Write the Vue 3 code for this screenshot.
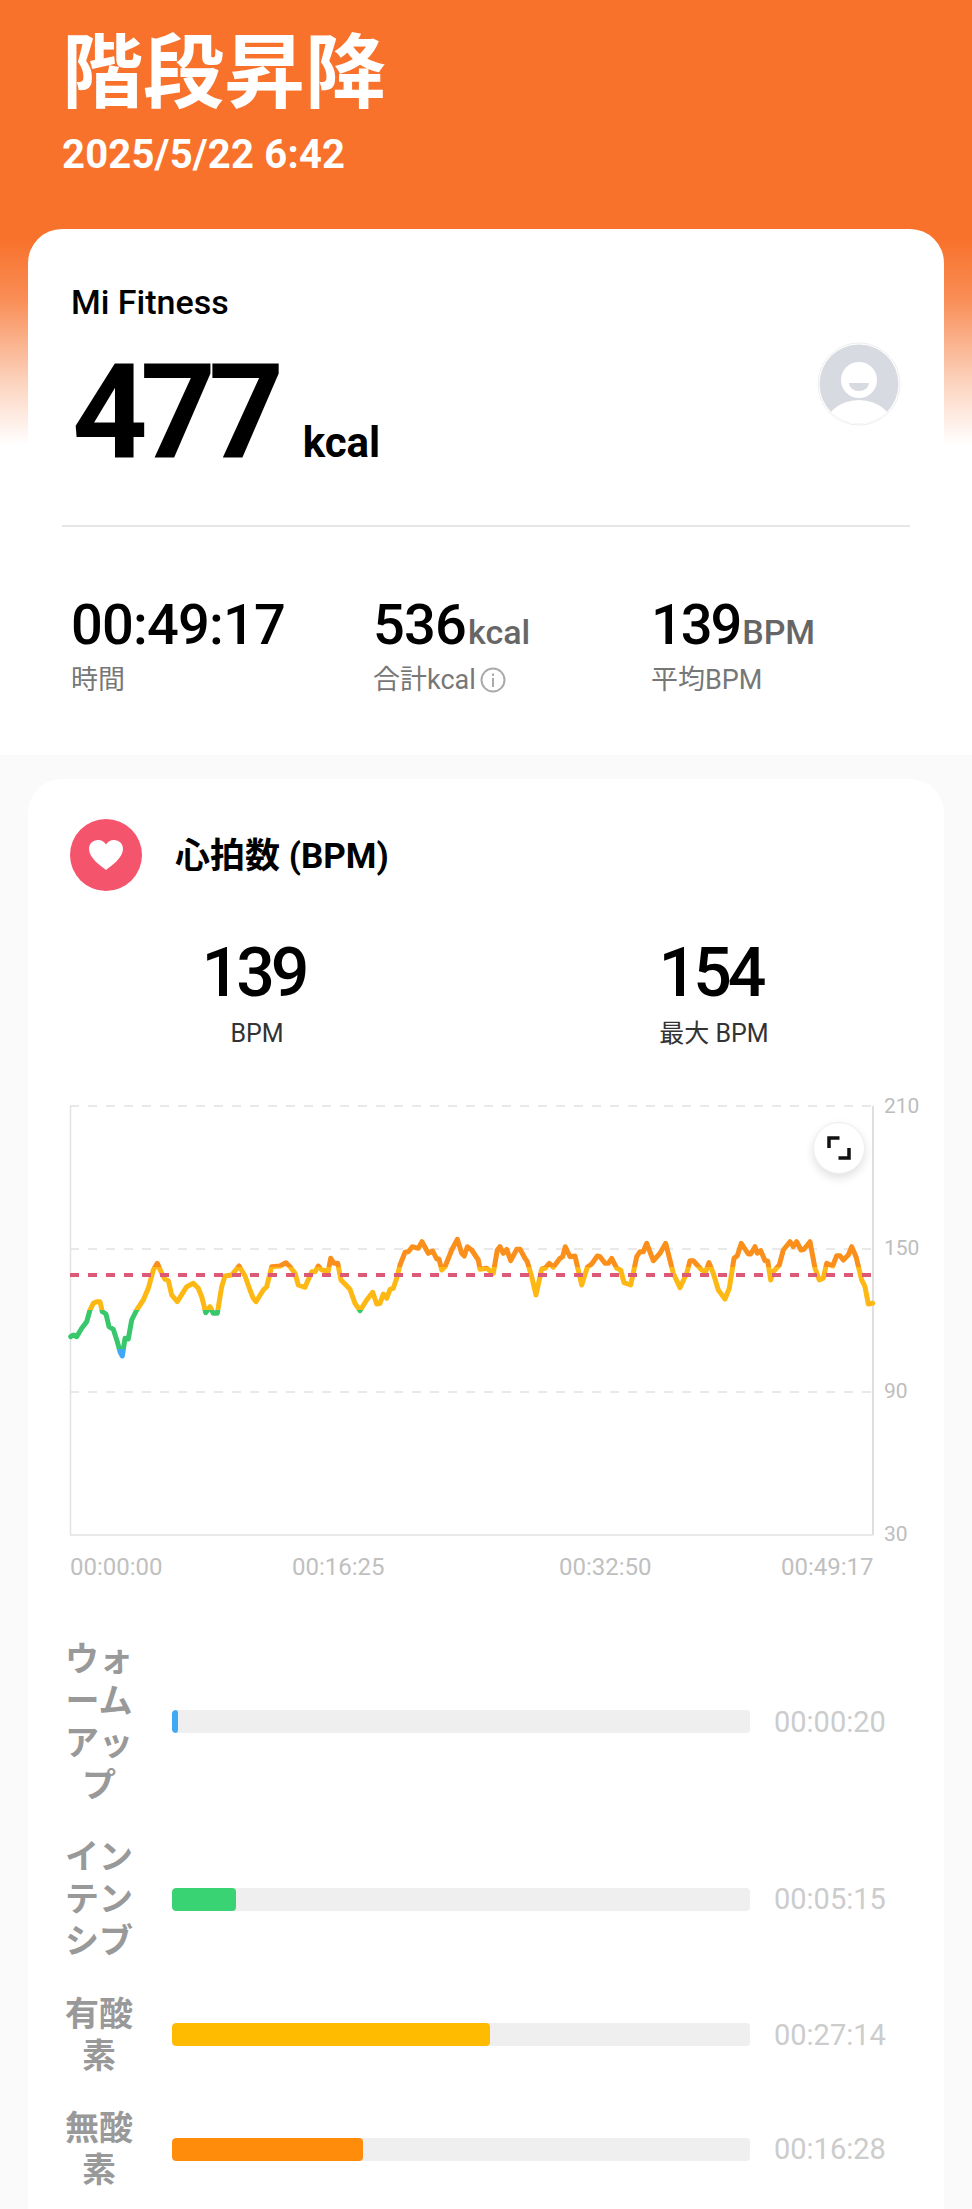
<template>
  <div class="page">
    <section class="summary">
      <header class="hero">
        <h1 class="hero-title">階段昇降</h1>
        <p class="hero-date">2025/5/22 6:42</p>
      </header>
      <div class="summary-card">
        <p class="source">Mi Fitness</p>
        <div class="calories">
          <div class="calories-value">
            <span class="big-num">477</span>
            <span class="big-unit">kcal</span>
          </div>
          <svg class="avatar" viewBox="0 0 84 84">
            <defs>
              <clipPath id="avatarClip"><circle cx="42" cy="42" r="39.5" /></clipPath>
            </defs>
            <circle cx="42" cy="42" r="41" fill="none" stroke="#eeeef0" stroke-width="1" />
            <circle cx="42" cy="42" r="39.5" fill="#d8dae2" />
            <g clip-path="url(#avatarClip)">
              <ellipse cx="42" cy="92" rx="37" ry="34" fill="#fff" />
              <circle cx="42" cy="38" r="18" fill="#fff" />
              <path d="M32 41h20a10 8 0 0 1-20 0z" fill="#d8dae2" />
            </g>
          </svg>
        </div>
        <div class="divider"></div>
        <div class="stats">
          <div v-for="s in stats" :key="s.label" class="stat">
            <div class="stat-value"><span :class="{ tight: s.tight }">{{ s.value }}</span><span v-if="s.unit" class="stat-unit">{{ s.unit }}</span></div>
            <div class="stat-label">
              {{ s.label }}
              <svg v-if="s.info" class="info-icon" viewBox="0 0 26 26">
                <circle cx="13" cy="13" r="11.5" fill="none" stroke="#aaa" stroke-width="2" />
                <rect x="12" y="11" width="2" height="9" fill="#aaa" />
                <rect x="12" y="6.5" width="2" height="2.5" fill="#aaa" />
              </svg>
            </div>
          </div>
        </div>
      </div>
    </section>

    <section class="heart-card">
      <div class="heart-head">
        <span class="heart-badge">
          <svg viewBox="0 0 34 30" width="34" height="30">
            <path d="M17 30C12 26 0 18 0 9C0 3.5 4 0 9 0C12.500 0 15.500 1.800 17 4.500C18.500 1.800 21.500 0 25 0C30 0 34 3.500 34 9C34 18 22 26 17 30Z" fill="#fff" />
          </svg>
        </span>
        <h2 class="heart-title">心拍数 (BPM)</h2>
      </div>
      <div class="heart-nums">
        <div class="heart-num">
          <div class="heart-val">139</div>
          <div class="heart-cap">BPM</div>
        </div>
        <div class="heart-num">
          <div class="heart-val">154</div>
          <div class="heart-cap">最大 BPM</div>
        </div>
      </div>

      <div class="chart">
        <svg class="chart-svg" viewBox="0 0 916 490" width="916" height="490">
          <defs>
            <linearGradient id="zoneGrad" gradientUnits="userSpaceOnUse" x1="0" y1="0" x2="0" y2="490">
              <stop v-for="(st, i) in zoneStops" :key="i" :offset="st.offset" :stop-color="st.color" />
            </linearGradient>
          </defs>
          <line v-for="y in [10, 153, 296]" :key="y" x1="42" x2="845" :y1="y" :y2="y" class="grid-dash" />
          <line x1="42.500" x2="42.500" y1="10" y2="439" stroke="#e2e2e2" stroke-width="1.500" />
          <line x1="845" x2="845" y1="10" y2="439" stroke="#d4d4d4" stroke-width="1.500" />
          <line x1="42" x2="845" y1="439" y2="439" stroke="#e2e2e2" stroke-width="1.500" />
          <polyline :points="linePoints" fill="none" stroke="url(#zoneGrad)" stroke-width="5" stroke-linejoin="round" stroke-linecap="round" />
          <line x1="42" x2="845" y1="179" y2="179" stroke="#dc5a75" stroke-width="4" stroke-dasharray="9 9" />
          <text v-for="t in yLabels" :key="t.text" x="856" :y="t.y" class="axis-y">{{ t.text }}</text>
          <text v-for="t in xLabels" :key="t.text" :x="t.x" y="479" class="axis-x">{{ t.text }}</text>
        </svg>
        <button class="expand" aria-label="expand">
          <svg viewBox="0 0 24 24" width="24" height="24">
            <path d="M12.500 2H2v10M11.500 22H22V12" fill="none" stroke="#111" stroke-width="3.500" />
          </svg>
        </button>
      </div>

      <div class="zones">
        <div v-for="z in zones" :key="z.label" class="zone">
          <div class="zone-label">{{ z.label }}</div>
          <div class="zone-track">
            <div class="zone-fill" :style="{ width: z.width + 'px', background: z.color }"></div>
          </div>
          <div class="zone-time">{{ z.time }}</div>
        </div>
      </div>
    </section>
  </div>
</template>

<script setup>
const stats = [
  { value: '00:49:17', label: '時間' },
  { value: '536', unit: 'kcal', label: '合計kcal', info: true },
  { value: '139', unit: 'BPM', label: '平均BPM', tight: true }
]

const zones = [
  { label: 'ウォームアップ', time: '00:00:20', width: 6, color: '#3fa9f5' },
  { label: 'インテンシブ', time: '00:05:15', width: 64, color: '#39d373' },
  { label: '有酸素', time: '00:27:14', width: 318, color: '#ffbb00' },
  { label: '無酸素', time: '00:16:28', width: 191, color: '#ff8c0a' }
]

const yLabels = [
  { text: '210', y: 17 },
  { text: '150', y: 159 },
  { text: '90', y: 302 },
  { text: '30', y: 445 }
]

const xLabels = [
  { text: '00:00:00', x: 42 },
  { text: '00:16:25', x: 264 },
  { text: '00:32:50', x: 531 },
  { text: '00:49:17', x: 753 }
]

// traced from the reference, in 3x crop coordinates
const left = [92,440,100,435,110,440,125,415,140,395,150,360,160,340,170,335,180,335,187,365,198,372,207,410,220,418,232,455,240,485,247,498,255,445,265,447,275,390,290,360,310,330,325,295,340,240,352,220,365,250,375,268,385,272,395,315,412,335,440,290,460,280,475,295,485,320,497,368,510,350,520,370,532,370,545,290,555,258,575,255,597,228,615,258,630,300,640,325,648,335,670,300,680,290,695,230,720,228,738,218,750,230,765,250,775,285,795,292,815,245,825,245,835,228,845,240,865,243,872,205,882,220,893,220,903,270,930,298,945,340,960,362,980,330,998,307,1010,342,1020,340,1030,312,1040,325,1050,298,1060,295,1070,265,1080,225,1095,187,1105,185,1117,170,1135,175,1146,155,1165,190,1178,183,1190,207,1197,207,1205,240,1215,230,1235,180,1252,148,1265,190,1273,198,1282,170,1295,180,1315,210,1320,238,1340,235,1360,250,1372,180,1380,170,1390,190,1400,178,1412,212,1430,178,1440,178]
const right = [60,178,75,205,82,215,95,260,108,315,125,237,135,235,148,220,160,232,180,205,188,200,196,170,210,200,225,198,245,285,262,232,275,222,292,198,300,200,315,220,325,220,335,205,350,235,362,240,372,278,392,285,410,200,420,185,430,185,440,160,460,212,480,190,497,160,520,250,540,293,560,250,570,212,580,212,605,240,617,245,627,218,640,250,655,300,675,327,688,295,702,205,712,197,724,160,745,192,752,192,765,170,772,190,782,182,795,212,803,213,812,270,820,245,838,225,850,180,870,155,880,170,890,155,903,180,912,178,930,155,945,235,958,270,970,265,980,220,998,228,1010,197,1020,197,1030,210,1045,195,1055,170,1068,200,1085,270,1095,290,1105,342,1118,340]

function mapPoints(arr, originX) {
  const out = []
  for (let i = 0; i < arr.length; i += 2) {
    const x = arr[i] / 3 + originX - 28
    const y = arr[i + 1] / 3 + 1190 - 1096
    out.push(x.toFixed(1) + ',' + y.toFixed(1))
  }
  return out
}

const linePoints = mapPoints(left, 40).concat(mapPoints(right, 500)).join(' ')

// colour changes by heart rate band, hard stops on y
const bands = [
  { end: 171, color: '#fb8f1b' },
  { end: 214, color: '#fdb813' },
  { end: 253, color: '#38c76c' },
  { end: 490, color: '#3fa9f5' }
]
const zoneStops = []
let prev = 0
for (const b of bands) {
  zoneStops.push({ offset: prev / 490, color: b.color })
  zoneStops.push({ offset: b.end / 490, color: b.color })
  prev = b.end
}
</script>

<style>
html, body {
  margin: 0;
  background: #fafafa;
}
</style>

<style scoped>
.page {
  width: 972px;
  height: 2209px;
  overflow: hidden;
  background: #fafafa;
  font-family: Roboto, "Noto Sans CJK JP", sans-serif;
}

.summary {
  height: 755px;
  background: linear-gradient(180deg, #f8722c 0, #f8722c 240px, #f98e57 300px, #fab08a 340px, #fcd5c1 385px, #ffffff 445px) no-repeat 0 0 / 100% 445px, #fff;
}

.hero {
  height: 229px;
  padding: 34px 0 0 62px;
  box-sizing: border-box;
  color: #fff;
}

.hero-title {
  margin: 0;
  font-size: 81px;
  line-height: 80px;
  font-weight: 700;
}

.hero-date {
  margin: 19px 0 0;
  font-size: 40px;
  line-height: 44px;
  font-weight: 700;
  letter-spacing: 0.2px;
}

.summary-card {
  margin: 0 28px;
  height: 526px;
  background: #fff;
  border-radius: 34px 34px 0 0;
  padding-top: 53px;
  box-sizing: border-box;
}

.source {
  margin: 0;
  padding-left: 43px;
  font-size: 34px;
  line-height: 40px;
  font-weight: 500;
  color: #000;
}

.calories {
  display: flex;
  justify-content: space-between;
  align-items: flex-start;
  margin-top: 24px;
  padding: 0 43px 0 44px;
  height: 132px;
}

.calories-value {
  display: flex;
  align-items: baseline;
}

.big-num {
  font-size: 132px;
  line-height: 132px;
  font-weight: 700;
  letter-spacing: -7.500px;
  color: #000;
}

.big-unit {
  margin-left: 26px;
  font-size: 42px;
  font-weight: 700;
  color: #000;
}

.avatar {
  width: 84px;
  height: 84px;
  margin-top: -4px;
}

.divider {
  height: 2px;
  margin: 47px 34px 0;
  background: #e6e6e6;
}

.stats {
  display: grid;
  grid-template-columns: 302px 278px 1fr;
  margin-top: 70px;
  padding-left: 43px;
}

.stat-value {
  font-size: 56px;
  line-height: 56px;
  font-weight: 500;
  letter-spacing: -0.800px;
  color: #000;
}

.tight {
  letter-spacing: -2.100px;
}

.stat-unit {
  margin-left: 2px;
  font-size: 34px;
  line-height: 1;
  font-weight: 500;
  letter-spacing: 0;
  color: #666;
}

.stat-label {
  display: flex;
  align-items: center;
  gap: 4px;
  margin-top: 10px;
  font-size: 27px;
  line-height: 34px;
  color: #777;
}

.info-icon {
  width: 26px;
  height: 26px;
}

.heart-card {
  margin: 24px 28px 0;
  height: 1430px;
  background: #fff;
  border-radius: 34px 34px 0 0;
}

.heart-head {
  display: flex;
  align-items: center;
  padding: 40px 0 0 42px;
}

.heart-badge {
  display: flex;
  align-items: center;
  justify-content: center;
  width: 72px;
  height: 72px;
  border-radius: 50%;
  background: #f5546d;
}

.heart-title {
  margin: 3px 0 0 33px;
  font-size: 35px;
  line-height: 44px;
  font-weight: 700;
  color: #000;
}

.heart-nums {
  display: flex;
  margin-top: 42.500px;
}

.heart-num {
  text-align: center;
}

.heart-num:first-child {
  width: 456px;
}

.heart-num:last-child {
  width: 458px;
}

.heart-val {
  margin-right: 5px;
  font-size: 68px;
  line-height: 78px;
  font-weight: 500;
  letter-spacing: -4px;
  color: #000;
}

.heart-cap {
  margin: 5.500px 0 0 2px;
  font-size: 25px;
  line-height: 34px;
  color: #333;
}

.chart {
  position: relative;
  margin-top: 45px;
  height: 490px;
}

.chart-svg {
  display: block;
}

.grid-dash {
  stroke: #e2e2e2;
  stroke-width: 1.500;
  stroke-dasharray: 9 9;
}

.axis-y {
  font-size: 21px;
  fill: #bdbdbd;
}

.axis-x {
  font-size: 24px;
  fill: #c0c0c0;
}

.expand {
  position: absolute;
  left: 785px;
  top: 26px;
  display: flex;
  align-items: center;
  justify-content: center;
  width: 52px;
  height: 52px;
  padding: 0;
  border: 1px solid #eee;
  border-radius: 50%;
  background: #fff;
  box-shadow: 0 4px 10px rgba(0, 0, 0, 0.12);
}

.zones {
  display: flex;
  flex-direction: column;
  gap: 30.500px;
  margin-top: 51.500px;
  padding-left: 37px;
}

.zone {
  display: flex;
  align-items: center;
}

.zone-label {
  width: 68px;
  font-size: 34px;
  line-height: 42px;
  font-weight: 700;
  text-align: center;
  color: #999;
}

.zone-track {
  width: 578px;
  height: 23px;
  margin-left: 39px;
  border-radius: 4px;
  background: #efefef;
  overflow: hidden;
}

.zone-fill {
  height: 100%;
  border-radius: 4px;
}

.zone-time {
  margin-left: 24px;
  font-size: 29px;
  color: #ccc;
}
</style>
